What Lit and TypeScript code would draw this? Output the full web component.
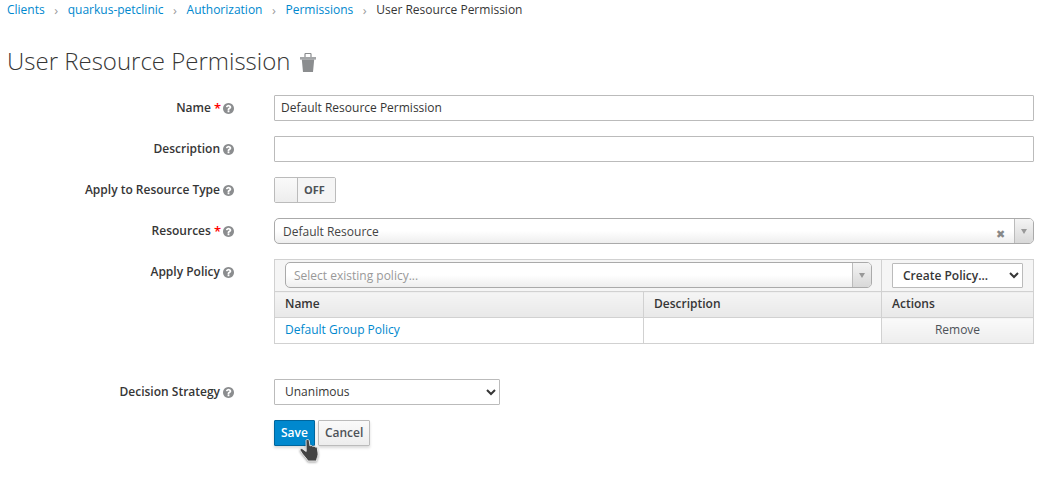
import { LitElement, html, css } from 'lit';
import { customElement } from 'lit/decorators.js';

const helpPath =
  'M1024 1376v-192q0-14-9-23t-23-9h-192q-14 0-23 9t-9 23v192q0 14 9 23t23 9h192q14 0 23-9t9-23zm256-672q0-88-55.5-163t-138.5-116-170-41q-243 0-371 213-15 24 8 42l132 100q7 6 19 6 16 0 25-12 53-68 86-92 34-24 86-24 48 0 85.5 26t37.5 59q0 38-20 61t-68 45q-63 28-115.5 86.5t-52.5 125.5v36q0 14 9 23t23 9h192q14 0 23-9t9-23q0-19 21.5-49.5t54.5-49.5q32-18 49-28.5t46-35 44.5-48 28-60.5 12.5-81zm384 192q0 209-103 385.5t-279.5 279.5-385.5 103-385.5-103-279.5-279.5-103-385.5 103-385.5 279.5-279.5 385.5-103 385.5 103 279.5 279.5 103 385.5z';

@customElement('app-root')
export class AppRoot extends LitElement {
  private crumbs = ['Clients', 'quarkus-petclinic', 'Authorization', 'Permissions'];

  private renderLabel(text: string, required = false) {
    return html`<label class="label">
      ${text}${required ? html`<span class="req">*</span>` : null}
      <svg class="help" viewBox="128 128 1536 1536"><path d=${helpPath}></path></svg>
    </label>`;
  }

  render() {
    return html`
      <ol class="crumbs">
        ${this.crumbs.map(c => html`<li><a>${c}</a><span class="sep">›</span></li>`)}
        <li class="current">User Resource Permission</li>
      </ol>

      <h1>
        User Resource Permission
        <svg class="trash" viewBox="0 0 16 19">
          <path d="M5 4.5V1.2C5 .8 5.3.5 5.7.5h4.6c.4 0 .7.3.7.7v3.3" fill="none" stroke="#8b8d8f" stroke-width="1.2"></path>
          <rect y="4" width="16" height="2.6" fill="#a3a5a7"></rect>
          <path d="M1.8 6.6h12.4L13 19H3z"></path>
        </svg>
      </h1>

      <form class="form">
        ${this.renderLabel('Name', true)}
        <input class="text" .value=${'Default Resource Permission'} />

        ${this.renderLabel('Description')}
        <input class="text" />

        ${this.renderLabel('Apply to Resource Type')}
        <div class="switch">
          <span class="handle"></span>
          <span class="off">OFF</span>
        </div>

        ${this.renderLabel('Resources', true)}
        <div class="combo">
          <span class="combo-text">Default Resource</span>
          <span class="clear">✖</span>
          <span class="combo-arrow"><i></i></span>
        </div>

        ${this.renderLabel('Apply Policy')}
        <table class="policies">
          <colgroup>
            <col class="c1" />
            <col class="c2" />
            <col />
          </colgroup>
          <tr class="tools">
            <td colspan="2">
              <div class="combo small">
                <span class="combo-text placeholder">Select existing policy...</span>
                <span class="combo-arrow"><i></i></span>
              </div>
            </td>
            <td class="create-cell">
              <select class="select create"><option>Create Policy...</option></select>
            </td>
          </tr>
          <tr class="head">
            <th>Name</th>
            <th>Description</th>
            <th>Actions</th>
          </tr>
          <tr class="row">
            <td><a>Default Group Policy</a></td>
            <td></td>
            <td class="remove">Remove</td>
          </tr>
        </table>

        ${this.renderLabel('Decision Strategy')}
        <select class="select strategy"><option>Unanimous</option></select>

        <div class="actions">
          <button type="button" class="btn primary">Save</button>
          <button type="button" class="btn">Cancel</button>
          <svg class="cursor" viewBox="0 0 18 22">
            <path
              d="M6 1.5C6 .2 9 .2 9.2 1.5L10 7c.8-.8 2.4-.5 2.8.5.8-.6 2.2-.3 2.5.7.8-.4 1.9 0 2 1l.7 4.8c.2 2.5-.5 4-1.2 6l-.3 2H8c-1-2-3-4-5.5-7L.3 11.5c-.8-1.2.7-2.6 2-1.7l3.9 2.7z"
            ></path>
          </svg>
        </div>
      </form>
    `;
  }

  static styles = css`
    :host {
      display: block;
      box-sizing: border-box;
      width: 1051px;
      height: 479px;
      padding: 1px 17px 0 7px;
      background: #fff;
      color: #363636;
      font: 12px/18px 'Open Sans', sans-serif;
      overflow: hidden;
    }

    a {
      color: #0088ce;
    }

    .crumbs {
      display: flex;
      margin: 0;
      padding: 0;
      list-style: none;
      height: 18px;
    }

    .crumbs li {
      display: flex;
    }

    .sep {
      width: 23px;
      text-align: center;
      color: #9c9c9c;
      font-size: 13px;
    }

    h1 {
      display: flex;
      align-items: center;
      gap: 10px;
      height: 34px;
      margin: 25px 0 17px;
      font-size: 24px;
      font-weight: 300;
      line-height: 34px;
    }

    .trash {
      width: 16px;
      height: 19px;
      margin-top: 2px;
      fill: #8b8d8f;
    }

    .form {
      display: grid;
      grid-template-columns: 267px 760px;
      row-gap: 15px;
      align-items: start;
    }

    .label {
      display: flex;
      justify-content: flex-end;
      align-items: center;
      gap: 2px;
      height: 26px;
      padding-right: 40px;
      font-weight: 600;
    }

    .req {
      color: #f00;
      margin: 0 -1px 0 1px;
      font-size: 13px;
    }

    .help {
      width: 11px;
      height: 11px;
      margin-left: 1px;
      fill: #8b8d8f;
    }

    .text {
      box-sizing: border-box;
      width: 100%;
      height: 26px;
      padding: 1px 6px 3px;
      border: 1px solid #bbb;
      border-radius: 1px;
      color: #363636;
      font: inherit;
      outline: none;
    }

    .switch {
      display: flex;
      box-sizing: border-box;
      width: 62px;
      height: 26px;
      border: 1px solid #bbb;
      border-radius: 2px;
    }

    .handle {
      width: 22px;
      border-right: 1px solid #bbb;
      background: linear-gradient(#fafafa, #ededed);
    }

    .off {
      flex: 1;
      padding-right: 4px;
      background: #f5f5f5;
      color: #4d5258;
      font-size: 11px;
      font-weight: 700;
      line-height: 24px;
      text-align: center;
    }

    .combo {
      display: flex;
      align-items: center;
      box-sizing: border-box;
      height: 26px;
      border: 1px solid #aaa;
      border-radius: 5px;
      background: linear-gradient(#fff 50%, #eee);
      color: #444;
    }

    .combo-text {
      flex: 1;
      padding: 1px 0 0 8px;
    }

    .placeholder {
      color: #999;
    }

    .clear {
      width: 18px;
      margin-top: 6px;
      color: #888;
      font-size: 11px;
      line-height: 12px;
    }

    .combo-arrow {
      display: flex;
      align-items: center;
      justify-content: center;
      align-self: stretch;
      width: 18px;
      border-left: 1px solid #bbb;
      border-radius: 0 4px 4px 0;
      background: linear-gradient(#f4f4f4, #d8d8d8);
    }

    .combo-arrow i {
      width: 0;
      height: 0;
      border: 3px solid transparent;
      border-top: 5px solid #999;
      border-bottom: 0;
    }

    .policies {
      box-sizing: border-box;
      width: 760px;
      border-collapse: collapse;
      table-layout: fixed;
    }

    .c1 {
      width: 369px;
    }

    .c2 {
      width: 238px;
    }

    .policies td,
    .policies th {
      box-sizing: border-box;
      height: 26px;
      padding: 0 10px 2px;
      border: 1px solid #d1d1d1;
      text-align: left;
    }

    .policies .tools td {
      height: 32px;
      padding: 2px 9px 3px 10px;
      background: #f5f5f5;
    }

    .policies .tools .create-cell {
      padding: 3px 10px;
    }

    .head th {
      background: linear-gradient(#f5f5f5, #e8e8e8);
      font-weight: 600;
    }

    .policies .remove {
      background: linear-gradient(#fafafa, #ededed);
      color: #4d5258;
      text-align: center;
    }

    .select {
      box-sizing: border-box;
      height: 26px;
      padding: 1px 6px 3px;
      border: 1px solid #bbb;
      border-radius: 1px;
      background: #fff;
      color: #363636;
      font: inherit;
    }

    .create {
      width: 100%;
      height: 25px;
      padding: 2px 6px;
      font-weight: 600;
    }

    .strategy {
      width: 226px;
      margin-top: 20px;
    }

    .label:nth-last-of-type(1) {
      margin-top: 20px;
    }

    .actions {
      position: relative;
      grid-column: 2;
      display: flex;
      gap: 3px;
    }

    .btn {
      box-sizing: border-box;
      height: 26px;
      padding: 0 6px;
      border: 1px solid #bbb;
      border-radius: 1px;
      background: linear-gradient(#fafafa, #ededed);
      box-shadow: 0 2px 3px rgba(3, 3, 3, 0.15);
      color: #4d5258;
      font: inherit;
      font-weight: 600;
    }

    .primary {
      border-color: #00659c;
      background: #0088ce;
      color: #fff;
    }

    .cursor {
      position: absolute;
      left: 26px;
      top: 19px;
      width: 18px;
      height: 22px;
      overflow: visible;
      fill: #444;
      stroke: #fff;
      stroke-width: 0.8;
      filter: drop-shadow(0 1px 1px rgba(0, 0, 0, 0.4));
    }
  `;
}

declare global {
  interface HTMLElementTagNameMap {
    'app-root': AppRoot;
  }
}
